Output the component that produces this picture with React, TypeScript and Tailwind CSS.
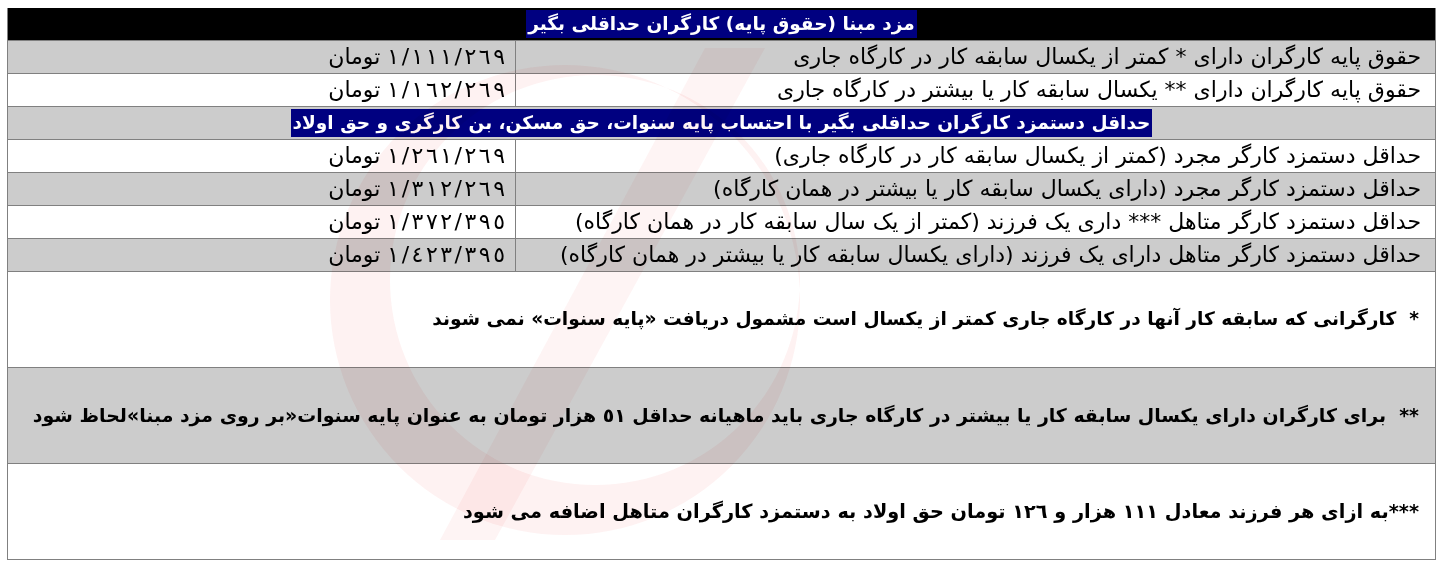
const rows: { label: string; value: string; shade: boolean }[] = [
  {
    label: "حقوق پایه کارگران دارای * کمتر از یکسال سابقه کار در کارگاه جاری",
    value: "١/١١١/٢٦٩",
    shade: true,
  },
  {
    label: "حقوق پایه کارگران دارای ** یکسال سابقه کار یا بیشتر در کارگاه جاری",
    value: "١/١٦٢/٢٦٩",
    shade: false,
  },
];

const rows2: { label: string; value: string; shade: boolean }[] = [
  {
    label: "حداقل دستمزد کارگر مجرد (کمتر از یکسال سابقه کار در کارگاه جاری)",
    value: "١/٢٦١/٢٦٩",
    shade: false,
  },
  {
    label: "حداقل دستمزد کارگر مجرد (دارای یکسال سابقه کار یا بیشتر در همان کارگاه)",
    value: "١/٣١٢/٢٦٩",
    shade: true,
  },
  {
    label: "حداقل دستمزد کارگر متاهل *** داری یک فرزند (کمتر از یک سال سابقه کار در همان کارگاه)",
    value: "١/٣٧٢/٣٩٥",
    shade: false,
  },
  {
    label: "حداقل دستمزد کارگر متاهل دارای یک فرزند (دارای یکسال سابقه کار یا بیشتر در همان کارگاه)",
    value: "١/٤٢٣/٣٩٥",
    shade: true,
  },
];

const notes: { text: string; shade: boolean; size: string }[] = [
  {
    text: "*  کارگرانی که سابقه کار آنها در کارگاه جاری کمتر از یکسال است مشمول دریافت «پایه سنوات» نمی شوند",
    shade: false,
    size: "text-[18.6px]",
  },
  {
    text: "**  برای کارگران دارای یکسال سابقه کار یا بیشتر در کارگاه جاری باید ماهیانه حداقل ٥١ هزار تومان به عنوان پایه سنوات«بر روی مزد مبنا»لحاظ شود",
    shade: true,
    size: "text-[18.9px]",
  },
  {
    text: "***به ازای هر فرزند معادل ١١١ هزار و ١٢٦ تومان حق اولاد به دستمزد کارگران متاهل اضافه می شود",
    shade: false,
    size: "text-[19.3px]",
  },
];

function Row({ label, value, shade }: { label: string; value: string; shade: boolean }) {
  return (
    <div
      className={`flex h-[33px] border-t border-[#808080] text-[22px] ${shade ? "bg-[#cccccc]" : "bg-white"}`}
    >
      <div className="flex flex-1 items-center pr-[14px] whitespace-nowrap">{label}</div>
      <div className="flex w-[508px] items-center gap-[7px] border-r border-[#808080] pr-[10px] whitespace-nowrap">
        <span dir="ltr" className="inline-flex gap-[2.5px]">
          {Array.from(value).map((ch, i) => (
            <span key={i}>{ch}</span>
          ))}
        </span>
        <span>تومان</span>
      </div>
    </div>
  );
}

// faint red logo printed behind the table
function Watermark() {
  return (
    <svg
      className="pointer-events-none absolute left-0 top-0 mix-blend-multiply"
      width="1442"
      height="571"
      viewBox="0 0 1442 571"
    >
      <path
        fillRule="evenodd"
        fill="#e8202a"
        fillOpacity="0.06"
        d="M330 300a235 235 0 1 0 470 0a235 235 0 1 0 -470 0z M390 280a205 205 0 1 0 410 0a205 205 0 1 0 -410 0z"
      />
      <polygon points="705,48 765,48 495,540 440,540" fill="#e8202a" fillOpacity="0.05" />
    </svg>
  );
}

export default function App() {
  return (
    <div className="relative h-[571px] w-[1442px] bg-white">
      <div
        dir="rtl"
        className="relative ml-[7px] pt-[8px] w-[1429px] leading-none text-black"
        style={{ fontFamily: '"DejaVu Sans", "Liberation Sans", sans-serif' }}
      >
        <div className="border-x border-b border-[#808080]">
          <div className="flex h-[32px] items-center justify-center bg-black">
            <span className="bg-[#000080] px-[2px] py-[5px] text-[18.5px] font-bold text-white">
              مزد مبنا (حقوق پایه) کارگران حداقلی بگیر
            </span>
          </div>
          {rows.map((r) => (
            <Row key={r.label} {...r} />
          ))}
          <div className="flex h-[33px] items-center justify-center border-t border-[#808080] bg-[#cccccc]">
            <span className="bg-[#000080] px-[2px] py-[5px] text-[18.5px] font-bold text-white whitespace-nowrap">
              حداقل دستمزد کارگران حداقلی بگیر با احتساب پایه سنوات، حق مسکن، بن کارگری و حق اولاد
            </span>
          </div>
          {rows2.map((r) => (
            <Row key={r.label} {...r} />
          ))}
          {notes.map((n) => (
            <div
              key={n.text}
              className={`flex h-[96px] items-center border-t border-[#808080] pr-[16px] font-bold whitespace-pre ${n.size} ${n.shade ? "bg-[#cccccc]" : "bg-white"}`}
            >
              {n.text}
            </div>
          ))}
        </div>
      </div>
      <Watermark />
    </div>
  );
}
